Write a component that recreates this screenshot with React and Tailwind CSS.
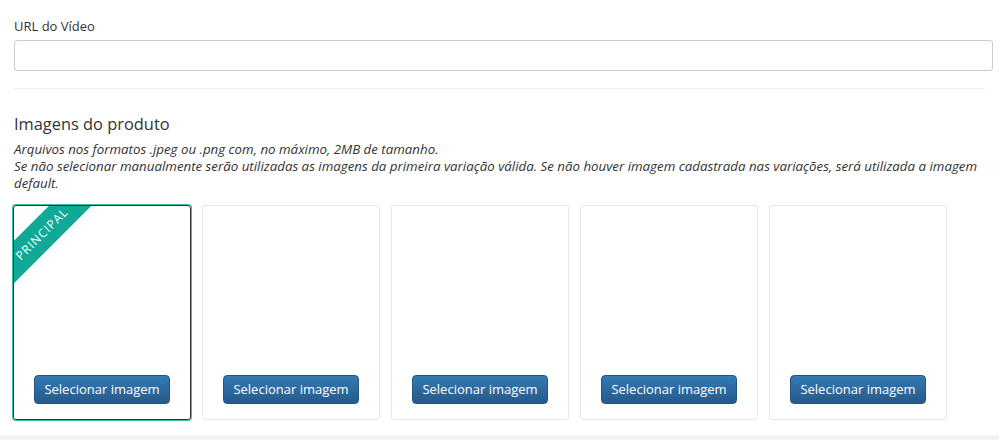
export default function App() {
  const slots = [0, 1, 2, 3, 4];
  return (
    <div className="w-[999px] h-[440px] bg-white flex flex-col overflow-hidden text-[#333]" style={{ fontFamily: '"Open Sans", sans-serif' }}>
      <div className="px-[14px] pt-[16px] flex-1">
        <label className="block text-[13px] leading-[20px] mb-[4px]">URL do Vídeo</label>
        <input className="block w-[979px] h-[31px] border border-[#ccc] rounded-[3px] px-2 text-[13px] outline-none" />
        <div className="h-px bg-[#eee] mt-[17px]" />
        <h3 className="text-[16.4px] leading-[24px] mt-[23px]">Imagens do produto</h3>
        <p className="italic text-[13.3px] leading-[17px] mt-[5px] w-[975px]">
          Arquivos nos formatos .jpeg ou .png com, no máximo, 2MB de tamanho.
          <br />
          Se não selecionar manualmente serão utilizadas as imagens da primeira variação válida. Se não houver imagem cadastrada nas variações, será utilizada a imagem default.
        </p>
        <div className="flex gap-[11px] mt-[13px] -ml-px">
          {slots.map((i) => (
            <div
              key={i}
              className={
                i === 0
                  ? "relative w-[178px] h-[215px] rounded-[3px] border border-[#333] shadow-[0_0_0_1px_#3cc0ad] overflow-hidden flex flex-col justify-end items-center pb-[15px]"
                  : "relative w-[178px] h-[215px] rounded-[3px] border border-[#e6e6e6] overflow-hidden flex flex-col justify-end items-center pb-[15px]"
              }
            >
              {i === 0 && (
                <div className="absolute left-[-28px] top-[13px] w-[112px] h-[30px] bg-[#10a896] -rotate-45 flex items-center justify-center text-white text-[12px] tracking-[1px]">
                  PRINCIPAL
                </div>
              )}
              <button className="w-[136px] h-[29px] rounded-[4px] border border-[#245580] bg-gradient-to-b from-[#337ab7] to-[#265a88] text-white text-[13px] leading-none">
                Selecionar imagem
              </button>
            </div>
          ))}
        </div>
      </div>
      <div className="h-[5px] bg-[#f3f4f5]" />
    </div>
  );
}
